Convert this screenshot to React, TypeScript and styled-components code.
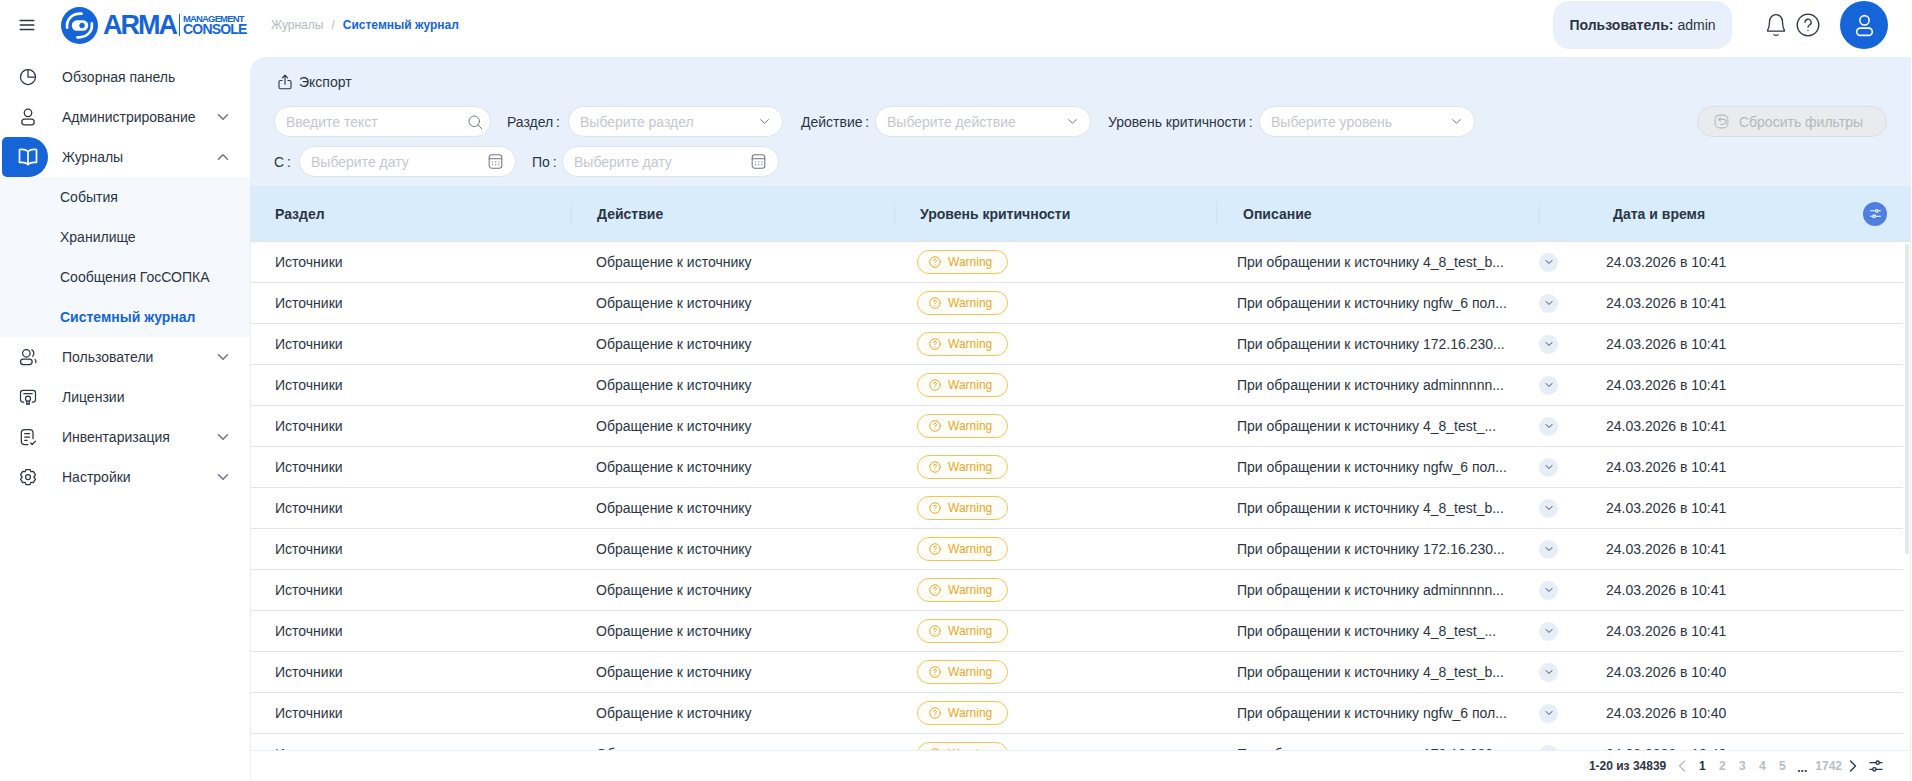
import React from 'react';
import styled, { createGlobalStyle } from 'styled-components';

const blue = '#1565d8';
const ink = '#2b3544';

const GlobalStyle = createGlobalStyle`
  html, body {
    margin: 0;
    height: 100%;
    overflow: hidden;
    background: #fff;
  }
  body {
    font-family: "Liberation Sans", Arial, sans-serif;
    font-size: 14px;
    color: ${ink};
  }
  * {
    box-sizing: border-box;
  }
`;

const Page = styled.div`
  display: grid;
  grid-template-columns: 250px 1fr;
  grid-template-rows: 57px 1fr;
  width: 1912px;
  height: 781px;
  overflow: hidden;
`;

const Header = styled.header`
  grid-column: 1 / 3;
  display: flex;
  align-items: center;
  padding: 1px 24px 8px 0;
`;

const Burger = styled.button`
  display: flex;
  width: 61px;
  padding: 0 0 0 18px;
  border: 0;
  background: none;
  color: ${ink};
`;

const LogoWrap = styled.div`
  display: flex;
  align-items: center;
  width: 210px;
  color: ${blue};
`;

const LogoWord = styled.span`
  margin-left: 5px;
  font-size: 27px;
  font-weight: 700;
  letter-spacing: -2px;
  line-height: 30px;
`;

const LogoSub = styled.span`
  display: flex;
  flex-direction: column;
  margin-left: 3px;
  padding-left: 3px;
  border-left: 1px solid ${blue};
  font-weight: 700;
  line-height: 1;
`;

const LogoTop = styled.span`
  font-size: 9.5px;
  letter-spacing: -0.85px;
`;

const LogoBottom = styled.span`
  margin-top: -1px;
  font-size: 14px;
  letter-spacing: -0.8px;
`;

const Crumbs = styled.nav`
  display: flex;
  gap: 8px;
  flex: 1;
  font-size: 12px;
  color: #b5b9bf;
`;

const CrumbActive = styled.span`
  color: ${blue};
  font-weight: 700;
`;

const UserBox = styled.div`
  display: flex;
  align-items: center;
  justify-content: center;
  width: 179px;
  height: 48px;
  margin-right: 31px;
  border-radius: 16px;
  background: #e8f1fb;
  b {
    font-weight: 700;
    margin-right: 4px;
  }
`;

const HeadIcon = styled.span`
  display: flex;
  margin-right: 6px;
  color: ${ink};
`;

const Avatar = styled.span`
  display: flex;
  align-items: center;
  justify-content: center;
  width: 48px;
  height: 48px;
  margin-left: 13px;
  border-radius: 50%;
  background: ${blue};
  color: #fff;
`;

const Sidebar = styled.aside`
  display: flex;
  flex-direction: column;
`;

const NavRow = styled.div`
  display: flex;
  align-items: center;
  height: 40px;
  color: ${ink};
`;

const NavIcon = styled.span<{ $active?: boolean }>`
  display: flex;
  align-items: center;
  justify-content: center;
  width: 46px;
  height: 40px;
  margin: 0 14px 0 2px;
  padding-left: 6px;
  border-radius: 5px 20px 20px 5px;
  background: ${(p) => (p.$active ? blue : 'transparent')};
  color: ${(p) => (p.$active ? '#fff' : ink)};
`;

const NavLabel = styled.span`
  flex: 1;
`;

const NavArrow = styled.span`
  display: flex;
  margin-right: 18px;
  color: #6b7480;
`;

const SubMenu = styled.div`
  display: flex;
  flex-direction: column;
  background: #f5f9fe;
`;

const SubItem = styled.div<{ $active?: boolean }>`
  display: flex;
  align-items: center;
  height: 40px;
  padding-left: 60px;
  font-weight: ${(p) => (p.$active ? 700 : 400)};
  color: ${(p) => (p.$active ? blue : ink)};
`;

const Main = styled.main`
  display: flex;
  flex-direction: column;
  min-height: 0;
  margin-right: 1px;
  border-radius: 16px 0 0 0;
  box-shadow: inset 1px 0 #e8f1fb, inset -1px 0 #e8f1fb;
  overflow: hidden;
`;

const Filters = styled.section`
  display: flex;
  flex-direction: column;
  height: 129px;
  padding: 14px 24px 0;
  background: #e8f1fb;
`;

const ExportBtn = styled.div`
  display: flex;
  align-items: center;
  gap: 5px;
  height: 22px;
  margin: 0 0 14px 2px;
  color: ${ink};
`;

const FilterLine = styled.div`
  display: flex;
  align-items: center;
  height: 31px;
  margin-bottom: 9px;
`;

const Field = styled.div<{ $width: number; $gap?: number }>`
  display: flex;
  align-items: center;
  justify-content: space-between;
  width: ${(p) => p.$width}px;
  height: 31px;
  margin-right: ${(p) => p.$gap ?? 0}px;
  padding: 0 10px 0 11px;
  border: 1px solid #dfe3e8;
  border-radius: 16px;
  background: #fff;
  color: #c4c7cc;
`;

const FieldIcon = styled.span`
  display: flex;
  color: #6f7680;
`;

const SearchIcon = styled(FieldIcon)`
  margin-right: -4px;
`;

const FieldLabel = styled.label<{ $width: number }>`
  flex: none;
  width: ${(p) => p.$width}px;
  color: ${ink};
`;

const ResetBtn = styled.div`
  display: flex;
  align-items: center;
  justify-content: center;
  gap: 9px;
  width: 190px;
  height: 31px;
  margin-left: auto;
  padding-right: 8px;
  border: 1px solid #d9dcdf;
  border-radius: 16px;
  background: #e9ebee;
  color: #b4b8bd;
`;

const HeadRow = styled.div`
  flex: none;
  display: grid;
  grid-template-columns: 322px 323px 322px 323px 371px;
  align-items: center;
  height: 56px;
  border-bottom: 1px solid #dfe4e9;
  background: #d9ecfb;
`;

const HeadCell = styled.div<{ $pad: number; $last?: boolean }>`
  position: relative;
  display: flex;
  align-items: center;
  height: 24px;
  padding-left: ${(p) => p.$pad}px;
  border-right: ${(p) => (p.$last ? '0' : '1px solid #cfe2f1')};
  font-weight: 700;
  color: ${ink};
`;

const ColumnsBtn = styled.span`
  position: absolute;
  top: 0;
  right: 24px;
  display: flex;
  align-items: center;
  justify-content: center;
  width: 24px;
  height: 24px;
  border-radius: 50%;
  background: #4f7fe3;
  color: #fff;
`;

const Body = styled.div`
  position: relative;
  flex: 1;
  min-height: 0;
  padding-right: 8px;
  overflow: hidden;
`;

const ScrollThumb = styled.div`
  position: absolute;
  top: 2px;
  right: 2px;
  width: 4px;
  height: 310px;
  border-radius: 2px;
  background: #e6e7e9;
`;

const Row = styled.div`
  display: grid;
  grid-template-columns: 321px 321px 322px 321px 1fr;
  align-items: center;
  height: 41px;
  border-bottom: 1px solid #e1e3e6;
  color: ${ink};
`;

const Cell = styled.div<{ $pad: number }>`
  display: flex;
  align-items: center;
  min-width: 0;
  padding-left: ${(p) => p.$pad}px;
`;

const Badge = styled.span`
  display: flex;
  align-items: center;
  gap: 6px;
  width: 91px;
  height: 24px;
  padding-left: 10px;
  border: 1px solid #f3c453;
  border-radius: 12px;
  background: #fffdf8;
  font-size: 12px;
  color: #e8a825;
`;

const Description = styled.span`
  flex: none;
  width: 273px;
  white-space: nowrap;
`;

const Expand = styled.span`
  flex: none;
  display: flex;
  align-items: center;
  justify-content: center;
  width: 19px;
  height: 19px;
  margin-left: 29px;
  border-radius: 50%;
  background: #e8eef7;
  color: #3d4856;
`;

const Footer = styled.footer`
  flex: none;
  display: flex;
  align-items: center;
  justify-content: flex-end;
  height: 31px;
  padding-right: 27px;
  border-top: 1px solid #e8f1fb;
  font-size: 12px;
`;

const Total = styled.span`
  margin-right: 6px;
  font-weight: 700;
  color: ${ink};
`;

const PageNum = styled.span<{ $current?: boolean }>`
  width: 20px;
  text-align: center;
  font-weight: 700;
  color: ${(p) => (p.$current ? ink : '#b9bdc3')};
`;

const LastPage = styled.span`
  margin-left: 3px;
  font-weight: 700;
  color: #b9bdc3;
`;

const Dots = styled.span`
  width: 20px;
  margin-top: 4px;
  text-align: center;
  font-weight: 700;
  color: ${ink};
`;

const PagerArrow = styled.span<{ $muted?: boolean }>`
  display: flex;
  margin-left: ${(p) => (p.$muted ? 0 : 1)}px;
  color: ${(p) => (p.$muted ? '#b9bdc3' : ink)};
`;

const FooterSettings = styled.span`
  display: flex;
  margin-left: 5px;
  color: ${ink};
`;

const Svg: React.FC<{ size?: number; sw?: number; children: React.ReactNode }> = ({ size = 20, sw = 1.5, children }) => (
  <svg width={size} height={size} viewBox="0 0 24 24" fill="none" stroke="currentColor" strokeWidth={sw} strokeLinecap="round" strokeLinejoin="round">
    {children}
  </svg>
);

const Chevron = ({ up, size = 16, sw = 2 }: { up?: boolean; size?: number; sw?: number }) => (
  <Svg size={size} sw={sw}>
    <path d={up ? 'M6 15l6-6 6 6' : 'M6 9l6 6 6-6'} />
  </Svg>
);

const UserIcon = ({ size = 20 }: { size?: number }) => (
  <Svg size={size}>
    <circle cx="12" cy="7" r="4.5" />
    <rect x="4.5" y="14.5" width="15" height="7" rx="3.5" />
  </Svg>
);

const Sliders = ({ size = 14 }: { size?: number }) => (
  <Svg size={size} sw={2}>
    <path d="M3 7h9M17 7h4M3 17h4M12 17h9" />
    <circle cx="14.5" cy="7" r="2.5" />
    <circle cx="9.5" cy="17" r="2.5" />
  </Svg>
);

const CalendarIcon = () => (
  <Svg size={19} sw={1.3}>
    <rect x="4" y="3.5" width="16" height="17" rx="3.5" />
    <path d="M4 8.5h16M8 12.5h.5M12 12.5h.5M16 12.5h.5M8 16h.5M12 16h.5M16 16h.5" />
  </Svg>
);

const WarnIcon = () => (
  <Svg size={14} sw={1.7}>
    <circle cx="12" cy="12" r="9" />
    <path d="M9.8 9.6a2.3 2.3 0 1 1 3 2.2c-.5.2-.8.6-.8 1.2M12 16.3h.01" />
  </Svg>
);

const Logo = () => (
  <LogoWrap>
    <svg width="37" height="37" viewBox="0 0 36 36">
      <circle cx="18" cy="18" r="18" fill={blue} />
      <path d="M6 20c-1-8 5-14 14-13.5" fill="none" stroke="#fff" strokeWidth="2.6" strokeLinecap="round" />
      <path d="M30 16c1 8-5 14-14 13.5" fill="none" stroke="#fff" strokeWidth="2.6" strokeLinecap="round" />
      <rect x="10.5" y="13" width="16" height="10" rx="5" fill="#fff" />
      <circle cx="20.5" cy="18" r="2.6" fill={blue} />
    </svg>
    <LogoWord>ARMA</LogoWord>
    <LogoSub>
      <LogoTop>MANAGEMENT</LogoTop>
      <LogoBottom>CONSOLE</LogoBottom>
    </LogoSub>
  </LogoWrap>
);

type NavEntry = { label: string; icon: React.ReactNode; arrow?: boolean; active?: boolean };

const navTop: NavEntry[] = [
  {
    label: 'Обзорная панель',
    icon: (
      <Svg>
        <path d="M12 3a9 9 0 1 0 9 9H12z" />
        <path d="M12 3a9 9 0 0 1 9 9" />
      </Svg>
    ),
  },
  { label: 'Администрирование', icon: <UserIcon />, arrow: true },
];

const navBottom: NavEntry[] = [
  {
    label: 'Пользователи',
    arrow: true,
    icon: (
      <Svg>
        <circle cx="10" cy="7.5" r="4.5" />
        <rect x="3" y="14.5" width="14" height="6.5" rx="3.25" />
        <path d="M16.5 3.5a4.5 4.5 0 0 1 1 7.5M20.5 15c1 1 1.2 2.5.7 3.8" />
      </Svg>
    ),
  },
  {
    label: 'Лицензии',
    icon: (
      <Svg>
        <path d="M7 18H6a3 3 0 0 1-3-3V7a3 3 0 0 1 3-3h12a3 3 0 0 1 3 3v8a3 3 0 0 1-3 3h-1" />
        <path d="M7 8h10" />
        <circle cx="12" cy="14" r="3" />
        <path d="M10.5 17v4l1.5-1 1.5 1v-4" />
      </Svg>
    ),
  },
  {
    label: 'Инвентаризация',
    arrow: true,
    icon: (
      <Svg>
        <path d="M12 21H8a4 4 0 0 1-4-4V7a4 4 0 0 1 4-4h6a4 4 0 0 1 4 4v7" />
        <path d="M8 8h6M8 12h6M8 16h3M15 19l2 2 4-4" />
      </Svg>
    ),
  },
  {
    label: 'Настройки',
    arrow: true,
    icon: (
      <Svg>
        <path d="M9.5 3h5l1 2.7 2.9-.5 2.5 4.3-1.9 2.5 1.9 2.5-2.5 4.3-2.9-.5-1 2.7h-5l-1-2.7-2.9.5-2.5-4.3L5 12 3.1 9.500l2.500-4.300 2.900.5z" />
        <circle cx="12" cy="12" r="3" />
      </Svg>
    ),
  },
];

const NavItem = ({ entry }: { entry: NavEntry }) => (
  <NavRow>
    <NavIcon $active={entry.active}>{entry.icon}</NavIcon>
    <NavLabel>{entry.label}</NavLabel>
    {entry.arrow && (
      <NavArrow>
        <Chevron up={entry.active} size={18} />
      </NavArrow>
    )}
  </NavRow>
);

const journals: NavEntry = {
  label: 'Журналы',
  active: true,
  arrow: true,
  icon: (
    <Svg size={24} sw={1.7}>
      <path d="M12 6.5C10 4.500 7 4 3.500 4.500v13c3.500-.5 6.500 0 8.500 2 2-2 5-2.500 8.500-2v-13C17 4 14 4.500 12 6.500z" />
      <path d="M12 6.5v13" />
    </Svg>
  ),
};

const descriptions = [
  '4_8_test_b...',
  'ngfw_6 пол...',
  '172.16.230...',
  'adminnnnn...',
  '4_8_test_...',
  'ngfw_6 пол...',
  '4_8_test_b...',
  '172.16.230...',
  'adminnnnn...',
  '4_8_test_...',
  '4_8_test_b...',
  'ngfw_6 пол...',
  '172.16.230...',
];

const App: React.FC = () => (
  <Page>
    <GlobalStyle />
    <Header>
      <Burger>
        <Svg size={18} sw={2}>
          <path d="M3 6h18M3 12h18M3 18h18" />
        </Svg>
      </Burger>
      <Logo />
      <Crumbs>
        <span>Журналы</span>
        <span>/</span>
        <CrumbActive>Системный журнал</CrumbActive>
      </Crumbs>
      <UserBox>
        <b>Пользователь:</b> admin
      </UserBox>
      <HeadIcon>
        <Svg size={26} sw={1.2}>
          <path d="M12 2.5c-3.5 0-6 2.700-6 6.500 0 4-.5 6-1.800 8-.2.300 0 .700.400.700h14.800c.400 0 .600-.400.400-.700-1.300-2-1.800-4-1.800-8 0-3.800-2.500-6.500-6-6.500z" />
          <path d="M10 21c1.300.7 2.700.7 4 0" />
        </Svg>
      </HeadIcon>
      <HeadIcon>
        <Svg size={26} sw={1.2}>
          <circle cx="12" cy="12" r="10" />
          <path d="M9.3 9.500a2.800 2.800 0 1 1 4 2.500c-.8.500-1.300 1-1.300 2M12 17h.01" />
        </Svg>
      </HeadIcon>
      <Avatar>
        <UserIcon size={25} />
      </Avatar>
    </Header>

    <Sidebar>
      {navTop.map((n) => (
        <NavItem key={n.label} entry={n} />
      ))}
      <NavItem entry={journals} />
      <SubMenu>
        <SubItem>События</SubItem>
        <SubItem>Хранилище</SubItem>
        <SubItem>Сообщения ГосСОПКА</SubItem>
        <SubItem $active>Системный журнал</SubItem>
      </SubMenu>
      {navBottom.map((n) => (
        <NavItem key={n.label} entry={n} />
      ))}
    </Sidebar>

    <Main>
      <Filters>
        <ExportBtn>
          <Svg size={18}>
            <path d="M8 10H6a2 2 0 0 0-2 2v7a2 2 0 0 0 2 2h12a2 2 0 0 0 2-2v-7a2 2 0 0 0-2-2h-2" />
            <path d="M12 15V3M8.500 6.500L12 3l3.500 3.500" />
          </Svg>
          Экспорт
        </ExportBtn>
        <FilterLine>
          <Field $width={217} $gap={16}>
            Введите текст
            <SearchIcon>
              <Svg size={18} sw={1.3}>
                <circle cx="11" cy="11" r="7" />
                <path d="M16 16l5 5" />
              </Svg>
            </SearchIcon>
          </Field>
          <FieldLabel $width={61}>Раздел&#8201;:</FieldLabel>
          <Field $width={215} $gap={18}>
            Выберите раздел
            <FieldIcon>
              <Chevron size={15} sw={1.6} />
            </FieldIcon>
          </Field>
          <FieldLabel $width={74}>Действие&#8201;:</FieldLabel>
          <Field $width={216} $gap={17}>
            Выберите действие
            <FieldIcon>
              <Chevron size={15} sw={1.6} />
            </FieldIcon>
          </Field>
          <FieldLabel $width={151}>Уровень критичности&#8201;:</FieldLabel>
          <Field $width={216}>
            Выберите уровень
            <FieldIcon>
              <Chevron size={15} sw={1.6} />
            </FieldIcon>
          </Field>
          <ResetBtn>
            <Svg size={17}>
              <rect x="3" y="3" width="18" height="18" rx="6" />
              <path d="M8 9h7a3.500 3.500 0 0 1 0 7h-4M10.500 6.500L8 9l2.500 2.500" />
            </Svg>
            Сбросить фильтры
          </ResetBtn>
        </FilterLine>
        <FilterLine>
          <FieldLabel $width={25}>С&#8201;:</FieldLabel>
          <Field $width={217} $gap={16}>
            Выберите дату
            <FieldIcon>
              <CalendarIcon />
            </FieldIcon>
          </Field>
          <FieldLabel $width={30}>По&#8201;:</FieldLabel>
          <Field $width={217}>
            Выберите дату
            <FieldIcon>
              <CalendarIcon />
            </FieldIcon>
          </Field>
        </FilterLine>
      </Filters>

      <HeadRow>
        <HeadCell $pad={25}>Раздел</HeadCell>
        <HeadCell $pad={25}>Действие</HeadCell>
        <HeadCell $pad={25}>Уровень критичности</HeadCell>
        <HeadCell $pad={26}>Описание</HeadCell>
        <HeadCell $pad={73} $last>
          Дата и время
          <ColumnsBtn>
            <Sliders size={13} />
          </ColumnsBtn>
        </HeadCell>
      </HeadRow>

      <Body>
        {descriptions.map((s, i) => (
          <Row key={i}>
            <Cell $pad={25}>Источники</Cell>
            <Cell $pad={25}>Обращение к источнику</Cell>
            <Cell $pad={25}>
              <Badge>
                <WarnIcon />
                Warning
              </Badge>
            </Cell>
            <Cell $pad={23}>
              <Description>При обращении к источнику {s}</Description>
              <Expand>
                <Chevron size={12} />
              </Expand>
            </Cell>
            <Cell $pad={71}>24.03.2026 в {i < 10 ? '10:41' : '10:40'}</Cell>
          </Row>
        ))}
        <ScrollThumb />
      </Body>

      <Footer>
        <Total>1-20 из 34839</Total>
        <PagerArrow $muted>
          <Svg size={20} sw={1.6}>
            <path d="M15 6l-6 6 6 6" />
          </Svg>
        </PagerArrow>
        <PageNum $current>1</PageNum>
        <PageNum>2</PageNum>
        <PageNum>3</PageNum>
        <PageNum>4</PageNum>
        <PageNum>5</PageNum>
        <Dots>...</Dots>
        <LastPage>1742</LastPage>
        <PagerArrow>
          <Svg size={20} sw={1.6}>
            <path d="M9 6l6 6-6 6" />
          </Svg>
        </PagerArrow>
        <FooterSettings>
          <Sliders size={16} />
        </FooterSettings>
      </Footer>
    </Main>
  </Page>
);

export default App;
